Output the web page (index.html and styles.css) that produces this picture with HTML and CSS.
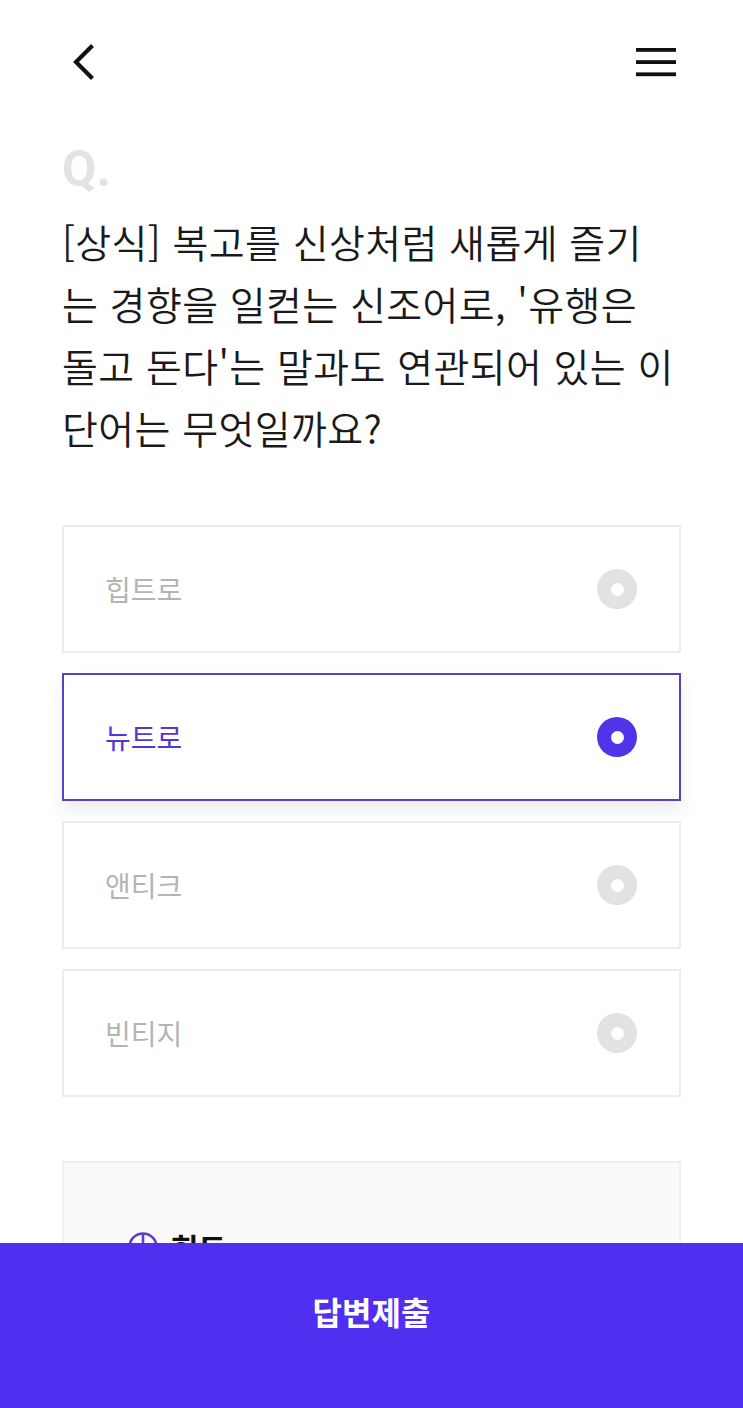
FILE: index.html
```html
<!DOCTYPE html>
<html lang="ko">
<head>
    <meta charset="UTF-8">
    <meta name="viewport" content="width=device-width, initial-scale=1.0">
    <title>퀴즈</title>
    <link rel="stylesheet" href="styles.css">
</head>
<body>
    <header class="topbar">
        <button class="icon-btn" aria-label="뒤로">
            <svg width="30" height="36" viewBox="0 0 30 36">
                <polyline points="21,3 6,18 21,33" fill="none" stroke="#111" stroke-width="4.2" stroke-linecap="square" stroke-linejoin="miter"/>
            </svg>
        </button>
        <button class="icon-btn" aria-label="메뉴">
            <svg width="42" height="32" viewBox="0 0 42 32">
                <rect x="1" y="2" width="40" height="3.8" fill="#111"/>
                <rect x="1" y="14.2" width="40" height="3.8" fill="#111"/>
                <rect x="1" y="26.4" width="40" height="3.8" fill="#111"/>
            </svg>
        </button>
    </header>

    <main class="quiz">
        <div class="q-mark">Q.</div>
        <h1 class="question">[상식] 복고를 신상처럼 새롭게 즐기<br>는 경향을 일컫는 신조어로, '유행은<br>돌고 돈다'는 말과도 연관되어 있는 이<br>단어는 무엇일까요?</h1>

        <ul class="options">
            <li class="option">
                <span class="label">힙트로</span>
                <span class="radio"></span>
            </li>
            <li class="option selected">
                <span class="label">뉴트로</span>
                <span class="radio"></span>
            </li>
            <li class="option">
                <span class="label">앤티크</span>
                <span class="radio"></span>
            </li>
            <li class="option">
                <span class="label">빈티지</span>
                <span class="radio"></span>
            </li>
        </ul>

        <section class="hint">
            <div class="hint-title">
                <svg width="32" height="32" viewBox="0 0 32 32">
                    <circle cx="16" cy="16" r="13.5" fill="none" stroke="#5a3fc8" stroke-width="2.6"/>
                    <line x1="16" y1="3" x2="16" y2="17" stroke="#5a3fc8" stroke-width="2.6"/>
                </svg>
                <span>힌트</span>
            </div>
        </section>
    </main>

    <button class="submit">답변제출</button>
</body>
</html>
```

FILE: styles.css
```css
body {
    margin: 0;
    padding: 0;
    background: #fff;
    font-family: 'Noto Sans CJK KR', 'Noto Sans', sans-serif;
    color: #1a1a1a;
    height: 1408px;
    overflow: hidden;
}
.topbar {
    height: 124px;
    display: flex;
    justify-content: space-between;
    align-items: center;
    padding: 0 66px 0 70px;
}
.icon-btn {
    background: none;
    border: none;
    padding: 0;
    display: flex;
    cursor: pointer;
}
.quiz {
    padding: 0 62px;
}
.q-mark {
    margin-top: 20px;
    font-family: 'Roboto', sans-serif;
    font-weight: 700;
    font-size: 50px;
    line-height: 50px;
    color: #e3e3e3;
}
.question {
    margin: 16px 0 0;
    font-size: 39px;
    font-weight: 350;
    line-height: 62px;
    letter-spacing: 0.4px;
    white-space: nowrap;
    color: #1a1a1a;
}
.options {
    list-style: none;
    margin: 67px 0 0;
    padding: 0;
    display: flex;
    flex-direction: column;
    gap: 20px;
}
.option {
    height: 124px;
    border: 2px solid #ededed;
    display: flex;
    align-items: center;
    justify-content: space-between;
    padding: 0 42px 0 41px;
    background: #fff;
}
.option .label {
    font-size: 28px;
    color: #b4b4b4;
}
.radio {
    width: 40px;
    height: 40px;
    border-radius: 50%;
    background: #e2e2e2;
    display: flex;
    align-items: center;
    justify-content: center;
}
.radio::after {
    content: '';
    width: 13px;
    height: 13px;
    border-radius: 50%;
    background: #fff;
}
.option.selected {
    border-color: #5b3fc6;
    box-shadow: 0 10px 18px rgba(0, 0, 0, 0.07);
}
.option.selected .label {
    color: #5236d6;
}
.option.selected .radio {
    background: #5133ea;
}
.hint {
    margin-top: 64px;
    background: #fafafa;
    border: 2px solid #efefef;
    height: 300px;
    padding: 62px 0 0 63px;
}
.hint-title {
    display: flex;
    align-items: center;
    gap: 12px;
    font-size: 30px;
    font-weight: 700;
    color: #111;
}
.submit {
    position: fixed;
    left: 0;
    bottom: 0;
    width: 100%;
    height: 165px;
    border: none;
    background: #512ff0;
    color: #fff;
    font-family: 'Noto Sans CJK KR', sans-serif;
    font-size: 32px;
    font-weight: 700;
    padding: 0 0 30px;
    cursor: pointer;
}
```
